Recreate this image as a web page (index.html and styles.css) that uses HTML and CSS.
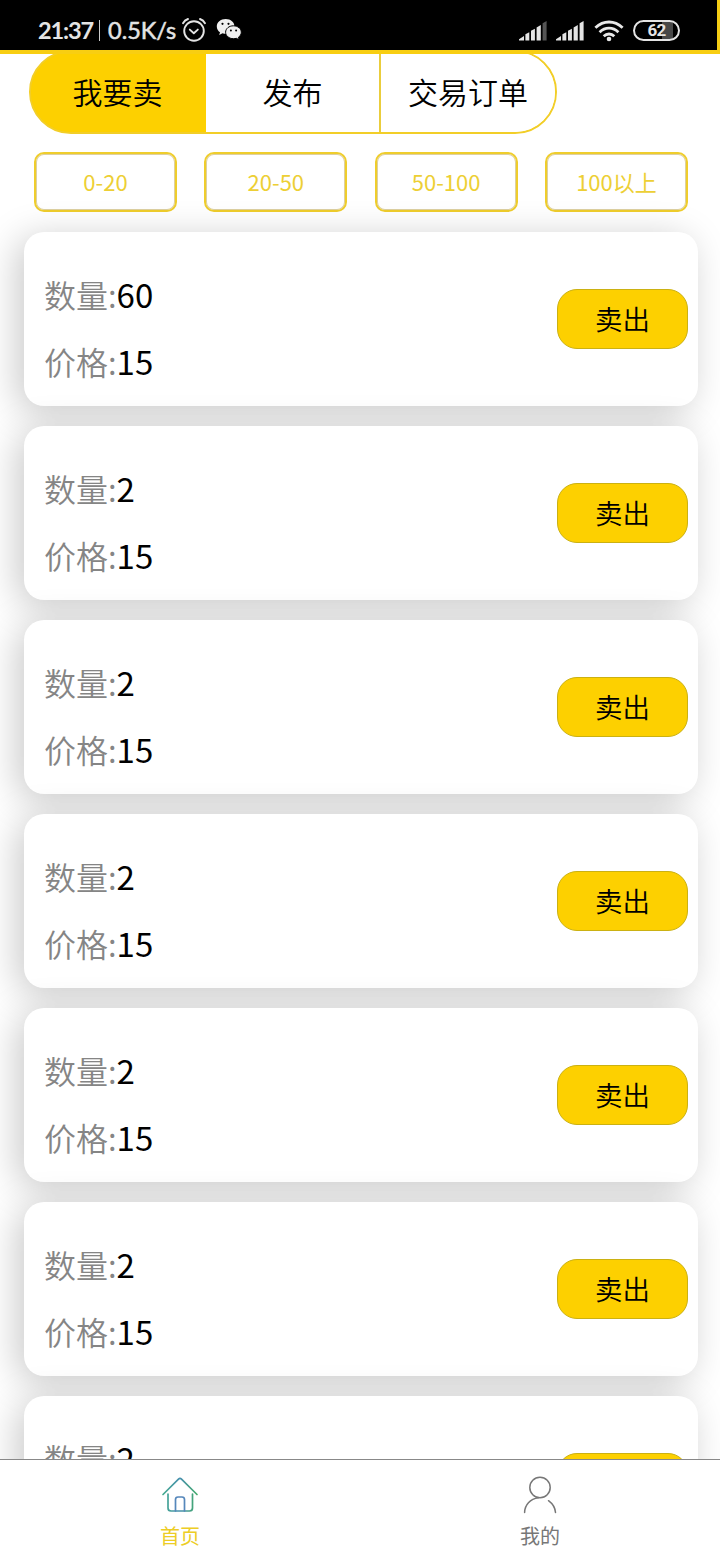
FILE: index.html
```html
<!DOCTYPE html>
<html lang="zh-CN">
<head>
<meta charset="utf-8">
<title>我要卖</title>
<link rel="stylesheet" href="styles.css">
</head>
<body>
<div class="screen">
  <header class="status">
    <div class="status-left">
      <span class="clock">21:37</span><span class="bar"></span><span class="speed">0.5K/s</span>
      <svg class="alarm" width="26" height="26" viewBox="0 0 26 26" fill="none" stroke="#e4e4e4" stroke-width="1.9" stroke-linecap="round" stroke-linejoin="round"><circle cx="13" cy="14" r="9.8"/><path d="M8.8 12.6l4 3.6 4-3.6M2 6.2Q3.6 3.2 7 2M24 6.2Q22.400 3.200 19 2"/></svg>
      <svg class="wechat" width="26" height="24" viewBox="0 0 26 24"><path fill="#f0f0f0" d="M9.700 1C4.500 1 .8 4.300.8 8.400c0 2.500 1.200 4.400 3.200 5.800L3.200 17l3.300-1.700q1.600.5 3.700.5C15 15.500 18.500 12.300 18.500 8.400 18.500 4.300 14.800 1 9.700 1Z"/><path fill="#f0f0f0" stroke="#000" stroke-width="1" d="M17.500 7.800c-4.600 0-7.900 2.900-7.900 6.400 0 3.600 3.400 6.500 7.900 6.500q1.500 0 2.800-.4l2.900 1.500-.8-2.500c1.800-1.200 2.900-3 2.900-5.100 0-3.500-3.400-6.400-7.800-6.400Z"/><g fill="#000"><circle cx="6.500" cy="5.800" r="1.100"/><circle cx="12.500" cy="5.800" r="1.100"/><circle cx="14.900" cy="12.500" r="1"/><circle cx="20.100" cy="12.500" r="1"/></g></svg>
    </div>
    <div class="status-right">
      <svg width="28" height="21" viewBox="0 0 28 21" fill="#e4e4e4"><path d="M0 20.500v-1.200l5-3.200v4.400zM6.400 20.500v-6.200l3.900-2v8.200zM12 20.500v-9.700l3.900-2v11.700zM17.600 20.500v-13l4.200-2.400v15.400z"/><path fill="#555" d="M23.600 20.500V3.200L27.600 1v19.500z"/></svg>
      <svg width="28" height="21" viewBox="0 0 28 21" fill="#e4e4e4"><path d="M0 20.500v-1.200l5-3.200v4.400zM6.400 20.500v-6.200l3.900-2v8.200zM12 20.500v-9.700l3.900-2v11.700zM17.600 20.500v-13l4.200-2.400v15.400zM23.600 20.500V3.200L27.600 1v19.500z"/></svg>
      <svg class="wifi" width="30" height="22" viewBox="0 0 30 22" fill="none" stroke="#e8e8e8" stroke-width="2.800"><path d="M1.400 7.800Q7.500 2 15 2t13.600 5.800M5.600 12.200Q9.700 8.200 15 8.200t9.400 4M9.700 16.200Q12 14 15 14t5.300 2.200"/><circle cx="15" cy="19" r="2.300" fill="#e8e8e8" stroke="none"/></svg>
      <span class="battery">62</span>
    </div>
  </header>

  <nav class="tabs">
    <div class="tab tab-active">我要卖</div>
    <div class="tab">发布</div>
    <div class="tab">交易订单</div>
  </nav>

  <div class="filters">
    <div class="filter">0-20</div>
    <div class="filter">20-50</div>
    <div class="filter">50-100</div>
    <div class="filter">100以上</div>
  </div>

  <main class="list">
    <div class="card"><div class="info"><p>数量:<b>60</b></p><p>价格:<b>15</b></p></div><div class="sell">卖出</div></div>
    <div class="card"><div class="info"><p>数量:<b>2</b></p><p>价格:<b>15</b></p></div><div class="sell">卖出</div></div>
    <div class="card"><div class="info"><p>数量:<b>2</b></p><p>价格:<b>15</b></p></div><div class="sell">卖出</div></div>
    <div class="card"><div class="info"><p>数量:<b>2</b></p><p>价格:<b>15</b></p></div><div class="sell">卖出</div></div>
    <div class="card"><div class="info"><p>数量:<b>2</b></p><p>价格:<b>15</b></p></div><div class="sell">卖出</div></div>
    <div class="card"><div class="info"><p>数量:<b>2</b></p><p>价格:<b>15</b></p></div><div class="sell">卖出</div></div>
    <div class="card"><div class="info"><p>数量:<b>2</b></p><p>价格:<b>15</b></p></div><div class="sell">卖出</div></div>
  </main>

  <footer class="tabbar">
    <div class="item item-active">
      <svg width="40" height="40" viewBox="0 0 40 40" fill="none" stroke-width="1.700" stroke-linecap="round" stroke-linejoin="round"><defs><linearGradient id="house" gradientUnits="userSpaceOnUse" x1="0" y1="0" x2="40" y2="0"><stop offset="0" stop-color="#45b08a"/><stop offset=".5" stop-color="#478fae"/><stop offset="1" stop-color="#43b05f"/></linearGradient></defs><g stroke="url(#house)"><path d="M3 19.500L18.500 4.200Q20 2.700 21.500 4.200L37 19.500"/><path d="M8 19V33Q8 36 11 36H29.500Q32.500 36 32.500 33V19"/><path stroke="#5587bb" d="M15.500 36V24.500Q15.500 22 18 22H22Q24.500 22 24.500 24.500V36"/></g></svg>
      <span>首页</span>
    </div>
    <div class="item">
      <svg width="40" height="40" viewBox="0 0 40 40" fill="none" stroke="#777" stroke-width="1.500" stroke-linecap="round"><circle cx="20" cy="12.500" r="10.200"/><path d="M18.500 22.800C10 24 4.800 30 4.600 37.500M28.500 25.700Q35 30.500 35.500 37.500"/></svg>
      <span>我的</span>
    </div>
  </footer>
</div>
</body>
</html>
```
FILE: styles.css
```css
* { box-sizing: border-box; }
body { margin: 0; font-family: "Noto Sans CJK SC", sans-serif; font-weight: 350; color: #000; background: #fff; }
.screen { width: 720px; height: 1560px; display: flex; flex-direction: column; overflow: hidden; }

.status { position: relative; z-index: 1; flex: none; height: 54px; padding: 10px 37px 0 38px; display: flex; justify-content: space-between; align-items: center; background: #000; border-right: 3px solid #f5cd14; border-bottom: 4px solid #f8ce12; color: #e4e4e4; font-family: Lato, sans-serif; }
.status-left, .status-right { display: flex; align-items: center; }
.clock { width: 55px; font-size: 23.5px; line-height: 40px; font-weight: 700; letter-spacing: -1.1px; white-space: nowrap; }
.bar { width: 1px; height: 21px; margin: 0 8px 0 6px; background: #ccc; }
.speed { width: 69px; font-size: 23.5px; font-weight: 400; -webkit-text-stroke: .5px #e4e4e4; white-space: nowrap; }
.alarm { margin-left: 4px; }
.wechat { margin-left: 9px; }
.status-right { gap: 9px; padding-top: 1px; }
.wifi { margin-left: 1px; }
.battery { width: 47px; height: 21px; border: 2px solid #e4e4e4; border-radius: 11px; background: linear-gradient(90deg, #000 62%, #484848 62%, #484848 88%, #000 88%); text-align: center; font: 700 17px/17px Roboto, sans-serif; letter-spacing: -.8px; }

.tabs { flex: none; display: grid; grid-template-columns: 175px 175px 1fr; width: 528px; height: 84px; margin: -4px 0 0 29px; border: 2px solid #f2ce28; border-radius: 42px; background: linear-gradient(90deg, #fdd000 170px, #fff 170px) border-box; overflow: hidden; }
.tab { display: flex; align-items: center; justify-content: center; padding-bottom: 2px; font-size: 30px; border-right: 2px solid #eacd3c; background: #fff; }
.tab:last-child { border-right: 0; }
.tab-active { background: #fdd000; border-color: #fdd000; }

.filters { flex: none; display: flex; justify-content: space-between; padding: 18px 32px 20px 34px; }
.filter { width: 143px; height: 60px; padding-bottom: 3px; border: 2px solid #efcd2c; border-radius: 10px; display: flex; align-items: center; justify-content: center; font-size: 22px; font-weight: 400; color: #edcf35; box-shadow: inset 0 0 0 1px #ddd0a0; }

.list { flex: 1; min-height: 0; display: flex; flex-direction: column; gap: 20px; padding: 0 22px 0 24px; }
.card { flex: none; height: 174px; display: flex; justify-content: space-between; align-items: center; padding: 0 10px 0 20px; background: #fff; border-radius: 20px; box-shadow: -7px 6px 37px rgba(0, 0, 0, .21); }
.info { padding-top: 17px; color: #858585; font-size: 32px; }
.info p { margin: 0; height: 67px; line-height: 67px; }
.info b { font-weight: 400; font-size: 33px; color: #000; }
.sell { width: 131px; height: 60px; padding-bottom: 3px; border: 1px solid #cbb112; border-radius: 20px; background: #fdd000; display: flex; align-items: center; justify-content: center; font-size: 27.5px; }

.tabbar { position: relative; z-index: 2; flex: none; height: 101px; display: flex; background: #fff; border-top: 1px solid #888; }
.item { flex: 1; display: flex; flex-direction: column; align-items: center; padding-top: 15px; font-size: 20px; line-height: 42px; color: #777; font-weight: 400; }
.item-active { color: #edcd25; }
.item svg { flex: none; }
```
